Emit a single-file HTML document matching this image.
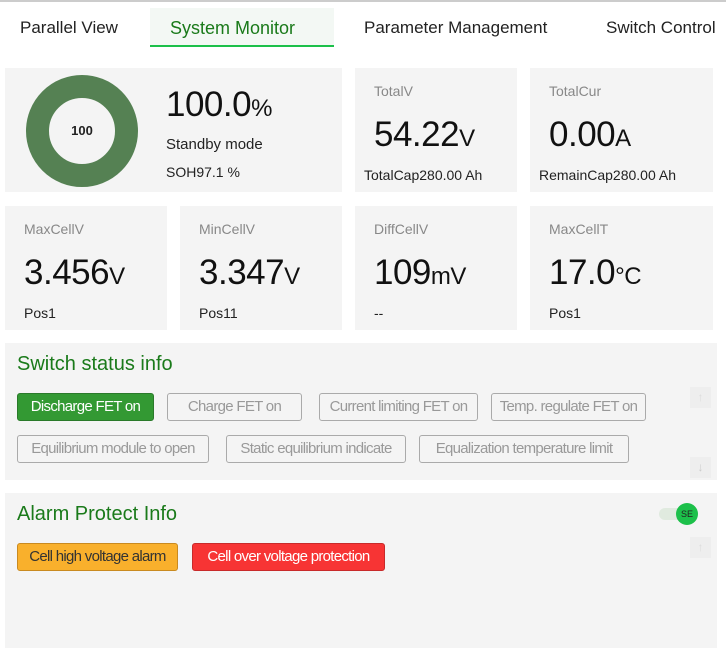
<!DOCTYPE html>
<html><head><style>
*{margin:0;padding:0;box-sizing:border-box}
body{width:726px;height:648px;background:#fff;font-family:"Liberation Sans",sans-serif;position:relative;overflow:hidden;color:#222}
.a{position:absolute}
.card{position:absolute;background:#f4f4f4}
.lbl{position:absolute;font-size:14px;color:#888}
.big{position:absolute;font-size:35px;color:#111;letter-spacing:-0.5px}
.big small{font-size:24px}
.sub{position:absolute;font-size:14px;color:#222}
.btn{position:absolute;height:28px;border:1px solid #aaa;border-radius:3px;font-size:15px;color:#999;line-height:26px;text-align:center;white-space:nowrap;letter-spacing:-0.7px;background:#f4f4f4;overflow:hidden}
.tab{position:absolute;font-size:17px;top:18px;color:#222}
</style></head><body>
<div class="a" style="left:0;top:0;width:726px;height:2px;background:#ccc"></div>
<div class="tab" style="left:20px">Parallel View</div>
<div class="a" style="left:150px;top:8px;width:184px;height:39px;background:#f3f8f4;border-bottom:2px solid #1cc04a"></div>
<div class="tab" style="left:170px;color:#1a7a1a;font-size:18px">System Monitor</div>
<div class="tab" style="left:364px">Parameter Management</div>
<div class="tab" style="left:606px">Switch Control</div>

<div class="card" style="left:5px;top:68px;width:337px;height:124px"></div>
<div class="a" style="left:26px;top:75px;width:112px;height:112px;border-radius:50%;border:23px solid #558153;background:#f4f4f4"></div>
<div class="a" style="left:26px;top:123px;width:112px;text-align:center;font-weight:bold;font-size:13px">100</div>
<div class="big" style="left:166px;top:85px">100.0<small>%</small></div>
<div class="sub" style="left:166px;top:136px;font-size:15px">Standby mode</div>
<div class="sub" style="left:166px;top:164px">SOH97.1 %</div>

<div class="card" style="left:355px;top:68px;width:162px;height:124px"></div>
<div class="lbl" style="left:374px;top:83px">TotalV</div>
<div class="big" style="left:374px;top:115px">54.22<small>V</small></div>
<div class="sub" style="left:364px;top:167px">TotalCap280.00 Ah</div>
<div class="card" style="left:530px;top:68px;width:183px;height:124px"></div>
<div class="lbl" style="left:549px;top:83px">TotalCur</div>
<div class="big" style="left:549px;top:115px">0.00<small>A</small></div>
<div class="sub" style="left:539px;top:167px">RemainCap280.00 Ah</div>

<div class="card" style="left:5px;top:206px;width:162px;height:124px"></div>
<div class="lbl" style="left:24px;top:221px">MaxCellV</div>
<div class="big" style="left:24px;top:253px">3.456<small>V</small></div>
<div class="sub" style="left:24px;top:305px">Pos1</div>
<div class="card" style="left:180px;top:206px;width:162px;height:124px"></div>
<div class="lbl" style="left:199px;top:221px">MinCellV</div>
<div class="big" style="left:199px;top:253px">3.347<small>V</small></div>
<div class="sub" style="left:199px;top:305px">Pos11</div>
<div class="card" style="left:355px;top:206px;width:162px;height:124px"></div>
<div class="lbl" style="left:374px;top:221px">DiffCellV</div>
<div class="big" style="left:374px;top:253px">109<small>mV</small></div>
<div class="sub" style="left:374px;top:305px">--</div>
<div class="card" style="left:530px;top:206px;width:183px;height:124px"></div>
<div class="lbl" style="left:549px;top:221px">MaxCellT</div>
<div class="big" style="left:549px;top:253px">17.0<small>°C</small></div>
<div class="sub" style="left:549px;top:305px">Pos1</div>

<div class="card" style="left:5px;top:343px;width:712px;height:137px"></div>
<div class="a" style="left:17px;top:353px;font-size:20px;color:#1a7a1a">Switch status info</div>
<div class="btn" style="left:17px;top:393px;width:137px;background:#339933;border-color:#2a7a2a;color:#fff">Discharge FET on</div>
<div class="btn" style="left:167px;top:393px;width:135px">Charge FET on</div>
<div class="btn" style="left:319px;top:393px;width:159px">Current limiting FET on</div>
<div class="btn" style="left:491px;top:393px;width:155px">Temp. regulate FET on</div>
<div class="btn" style="left:17px;top:435px;width:192px">Equilibrium module to open</div>
<div class="btn" style="left:226px;top:435px;width:180px">Static equilibrium indicate</div>
<div class="btn" style="left:419px;top:435px;width:210px">Equalization temperature limit</div>
<div class="a" style="left:690px;top:387px;width:21px;height:21px;background:#eee;color:#ddd;font-size:12px;text-align:center;line-height:21px">↑</div>
<div class="a" style="left:690px;top:457px;width:21px;height:21px;background:#eee;color:#ccc;font-size:12px;text-align:center;line-height:21px">↓</div>

<div class="card" style="left:5px;top:493px;width:712px;height:155px"></div>
<div class="a" style="left:17px;top:503px;font-size:20px;color:#1a7a1a">Alarm Protect Info</div>
<div class="a" style="left:659px;top:508px;width:32px;height:12px;border-radius:6px;background:#e0eadf"></div>
<div class="a" style="left:676px;top:503px;width:22px;height:22px;border-radius:50%;background:#1cc04a;font-size:9px;text-align:center;line-height:22px;color:#222">SE</div>
<div class="btn" style="left:17px;top:543px;width:161px;background:#f9b02c;border-color:#c98a20;color:#333">Cell high voltage alarm</div>
<div class="btn" style="left:192px;top:543px;width:193px;background:#f73434;border-color:#c82a2a;color:#fff">Cell over voltage protection</div>
<div class="a" style="left:690px;top:537px;width:21px;height:21px;background:#eee;color:#ddd;font-size:12px;text-align:center;line-height:21px">↑</div>
</body></html>
